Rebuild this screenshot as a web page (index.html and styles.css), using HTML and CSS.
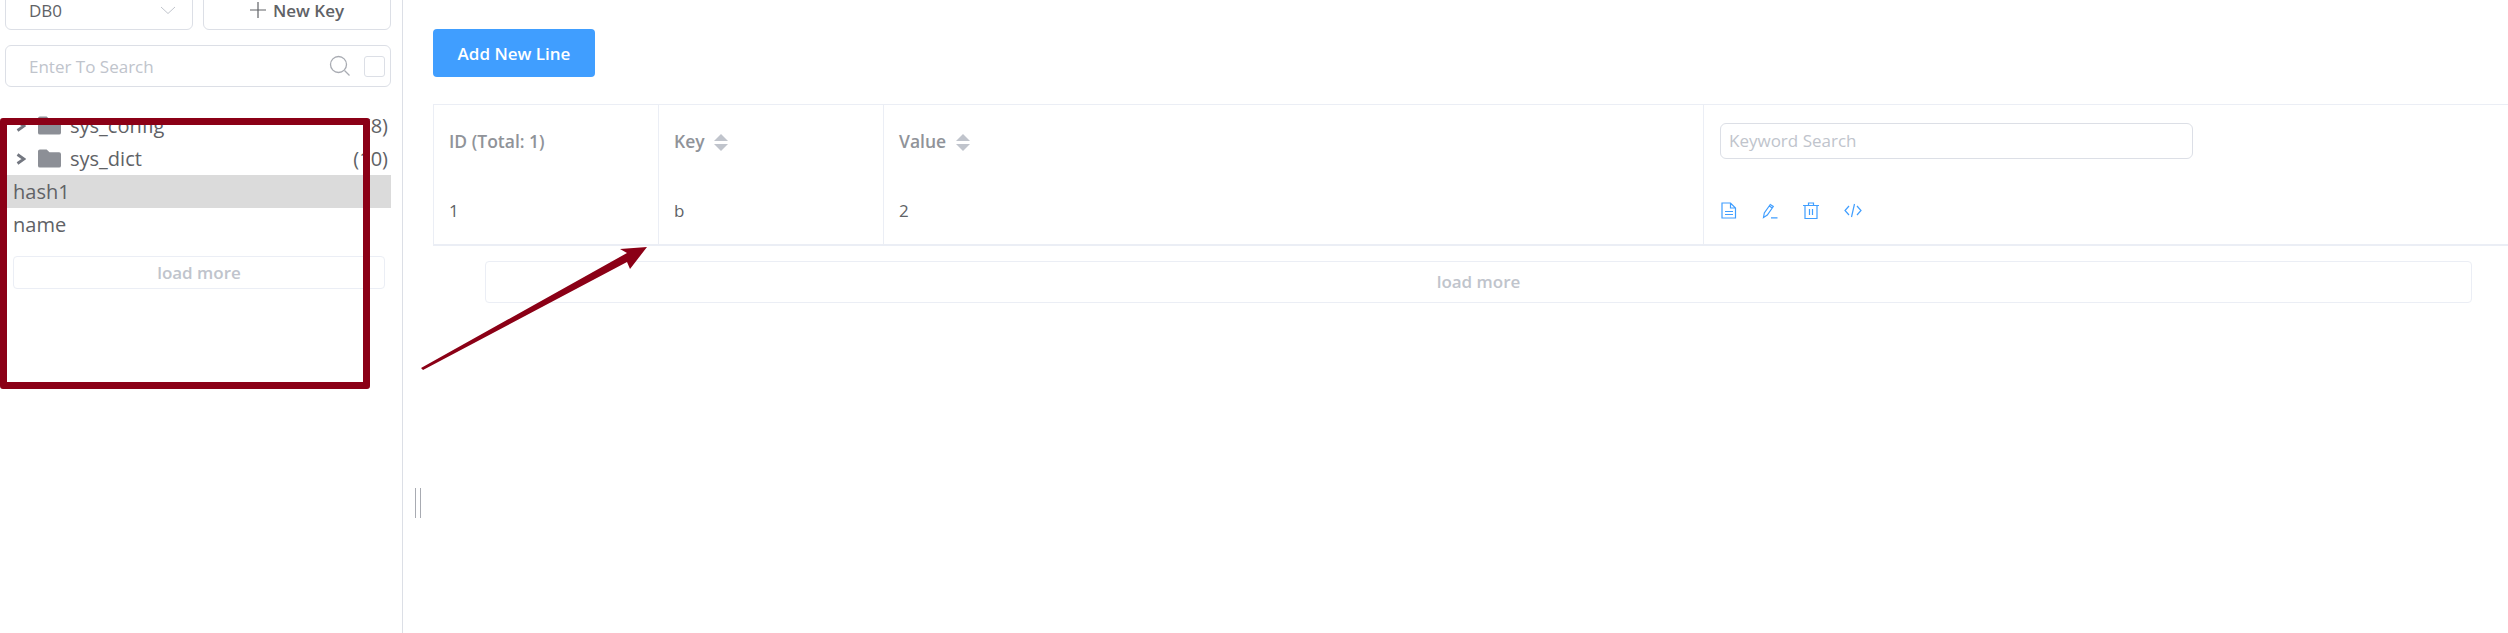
FILE: index.html
```html
<!DOCTYPE html>
<html lang="en">
<head>
    <meta charset="UTF-8">
    <title>Redis Keys</title>
    <link rel="stylesheet" href="styles.css">
</head>
<body>
    <div class="page">
        <aside class="sidebar">
            <div class="toolbar">
                <div class="db-select">
                    <span>DB0</span>
                    <svg class="chevron" viewBox="0 0 16 8" width="16" height="8"><path d="M1 1l7 6.500 7-6.500" fill="none" stroke="#c0c4cc" stroke-width="1"/></svg>
                </div>
                <button class="new-key"><svg class="plus" viewBox="0 0 16 16" width="16" height="16"><path d="M8 0v16M0 8h16" stroke="#606266" stroke-width="1.200"/></svg>New Key</button>
            </div>
            <div class="search-box">
                <span class="search-text">Enter To Search</span>
                <svg class="search-icon" viewBox="0 0 22 22" width="22" height="22"><circle cx="9.500" cy="9.500" r="8" fill="none" stroke="#a8abb2" stroke-width="1.300"/><path d="M15.500 15.500l5 5" stroke="#a8abb2" stroke-width="1.300"/></svg>
                <span class="checkbox"></span>
            </div>
            <ul class="tree">
                <li class="tree-row">
                    <svg class="arrow-right" viewBox="0 0 10 12" width="10" height="12"><path d="M1.500 1.500l6.500 4.500-6.500 4.500" fill="none" stroke="#737780" stroke-width="2.800"/></svg>
                    <svg class="folder" viewBox="0 0 24 19" width="23" height="19"><path d="M2 0h7l3 3h10a2 2 0 0 1 2 2v12a2 2 0 0 1-2 2H2a2 2 0 0 1-2-2V2a2 2 0 0 1 2-2z" fill="#8c8f96"/></svg>
                    <span class="tree-name">sys_config</span>
                    <span class="tree-count">(8)</span>
                </li>
                <li class="tree-row">
                    <svg class="arrow-right" viewBox="0 0 10 12" width="10" height="12"><path d="M1.500 1.500l6.500 4.500-6.500 4.500" fill="none" stroke="#737780" stroke-width="2.800"/></svg>
                    <svg class="folder" viewBox="0 0 24 19" width="23" height="19"><path d="M2 0h7l3 3h10a2 2 0 0 1 2 2v12a2 2 0 0 1-2 2H2a2 2 0 0 1-2-2V2a2 2 0 0 1 2-2z" fill="#8c8f96"/></svg>
                    <span class="tree-name">sys_dict</span>
                    <span class="tree-count">(10)</span>
                </li>
                <li class="key-row selected">hash1</li>
                <li class="key-row">name</li>
            </ul>
            <div class="load-more side-more">load more</div>
        </aside>

        <main class="content">
            <button class="add-line">Add New Line</button>
            <table class="lines">
                <colgroup>
                    <col class="col-id">
                    <col class="col-key">
                    <col class="col-value">
                    <col>
                </colgroup>
                <thead>
                    <tr>
                        <th>ID (Total: 1)</th>
                        <th>Key <span class="sort"><i class="up"></i><i class="down"></i></span></th>
                        <th>Value <span class="sort"><i class="up"></i><i class="down"></i></span></th>
                        <th><div class="keyword">Keyword Search</div></th>
                    </tr>
                </thead>
                <tbody>
                    <tr>
                        <td>1</td>
                        <td>b</td>
                        <td>2</td>
                        <td>
                            <div class="actions">
                                <svg viewBox="0 0 16 17" width="16" height="17"><path d="M1 1h8.500l5 5v10H1zM9.500 1v5h5M4 9.500h8M4 12.500h8" fill="none" stroke="#409eff" stroke-width="1.200"/></svg>
                                <svg viewBox="0 0 16 17" width="16" height="17"><path d="M1.500 15.500l.8-4.500 6-8.500 3 2-6 8.500zM7.300 4l3 2M9 15.800h6.500" fill="none" stroke="#409eff" stroke-width="1.200"/></svg>
                                <svg viewBox="0 0 16 17" width="16" height="17"><path d="M0 3.500h16M5.500 3.500v-2.500h5v2.500M2 3.500v13h12v-13M6.500 7v6M9.500 7v6" fill="none" stroke="#409eff" stroke-width="1.200"/></svg>
                                <svg viewBox="0 0 18 15" width="18" height="15"><path d="M5 3L1 7.500l4 4.500M13 3l4 4.500-4 4.500M10.500 1l-3 13" fill="none" stroke="#409eff" stroke-width="1.200"/></svg>
                            </div>
                        </td>
                    </tr>
                </tbody>
            </table>
            <div class="load-more main-more">load more</div>
        </main>
    </div>

    <!-- handle between sidebar and content -->
    <div class="resizer"></div>

    <!-- annotations drawn over the screenshot -->
    <div class="note-box"></div>
    <svg class="note-arrow" viewBox="0 0 240 130" width="240" height="130"><polygon points="1,122 207,7 200,3 227,1 210,23 207,16 3,124" fill="#8b0016"/></svg>
</body>
</html>
```

FILE: styles.css
```css
* {
    box-sizing: border-box;
}

html, body {
    margin: 0;
    padding: 0;
    height: 100%;
    overflow: hidden;
    background-color: #fff;
}

body {
    font-family: "Open Sans", "Noto Sans", Arial, sans-serif;
    font-size: 17px;
    color: #606266;
    position: relative;
}

ul {
    list-style: none;
    margin: 0;
    padding: 0;
}

button {
    font-family: inherit;
}

.page {
    display: flex;
    height: 633px;
}

.sidebar {
    width: 403px;
    flex: none;
    border-right: 1px solid #dcdfe6;
    padding: 0 11px 0 5px;
}

.toolbar {
    display: flex;
    gap: 10px;
    margin-top: -10px;
}

.db-select,
.new-key {
    flex: 0 0 188px;
    height: 40px;
    border: 1px solid #dcdfe6;
    border-radius: 6px;
    background: #fff;
}

.db-select {
    display: flex;
    align-items: center;
    justify-content: space-between;
    padding: 0 16px 0 23px;
}

.new-key {
    display: flex;
    align-items: center;
    justify-content: center;
    gap: 7px;
    font-size: 17px;
    font-weight: 600;
    color: #606266;
    padding: 0;
}

.search-box {
    display: flex;
    align-items: center;
    height: 42px;
    margin-top: 15px;
    padding: 0 5px 0 23px;
    border: 1px solid #dcdfe6;
    border-radius: 6px;
}

.search-text {
    flex: 1;
    color: #c0c4cc;
}

.search-icon {
    margin-right: 13px;
}

.checkbox {
    width: 21px;
    height: 21px;
    border: 1px solid #dcdfe6;
    border-radius: 3px;
}

.tree {
    margin-top: 22px;
}

.tree-row,
.key-row {
    display: flex;
    align-items: center;
    height: 33px;
    font-size: 20px;
}

.tree-row {
    padding-left: 11px;
}

.folder {
    margin: 0 9px 0 12px;
}

.tree-name {
    flex: 1;
}

.tree-count {
    padding-right: 3px;
}

.key-row {
    padding-left: 8px;
}

.selected {
    background-color: #dbdbdb;
}

.load-more {
    border: 1px solid #ebeef5;
    border-radius: 4px;
    text-align: center;
    font-weight: 600;
    color: #c0c4cc;
}

.side-more {
    margin: 15px 6px 0 8px;
    height: 33px;
    line-height: 31px;
}

.content {
    flex: 1;
    min-width: 0;
    padding: 29px 0 0 30px;
    overflow: hidden;
}

.add-line {
    display: block;
    width: 162px;
    height: 48px;
    border: none;
    border-radius: 4px;
    background-color: #409eff;
    color: #fff;
    font-size: 17px;
    font-weight: 600;
}

.lines {
    width: 2091px;
    margin-top: 27px;
    border-collapse: separate;
    border-spacing: 0;
    table-layout: fixed;
    border-top: 1px solid #ebeef5;
    border-left: 1px solid #ebeef5;
    border-bottom: 2px solid #ebeef5;
}

.col-id,
.col-key {
    width: 225px;
}

.col-value {
    width: 820px;
}

.lines th,
.lines td {
    text-align: left;
    padding: 0 15px;
    border-right: 1px solid #ebeef5;
}

.lines th {
    height: 71px;
    font-size: 17.500px;
    font-weight: 600;
    color: #909399;
}

.lines td {
    height: 68px;
}

.sort {
    display: inline-flex;
    flex-direction: column;
    gap: 3px;
    margin-left: 5px;
    vertical-align: middle;
}

.sort i {
    width: 0;
    height: 0;
    border-left: 7.500px solid transparent;
    border-right: 7.500px solid transparent;
}

.sort .up {
    border-bottom: 7px solid #c0c4cc;
}

.sort .down {
    border-top: 7px solid #c0c4cc;
}

.keyword {
    width: 473px;
    height: 36px;
    line-height: 34px;
    padding-left: 8px;
    margin-left: 1px;
    border: 1px solid #dcdfe6;
    border-radius: 6px;
    font-size: 17px;
    font-weight: 400;
    color: #c0c4cc;
}

.actions {
    display: flex;
    align-items: center;
    gap: 25px;
    padding-left: 2px;
}

.main-more {
    width: 1987px;
    height: 42px;
    line-height: 40px;
    margin: 15px 0 0 52px;
}

.resizer {
    position: absolute;
    left: 415px;
    top: 488px;
    width: 6px;
    height: 30px;
    border-left: 1px solid #a8abb2;
    border-right: 1px solid #a8abb2;
}

.note-box {
    position: absolute;
    left: 0;
    top: 118px;
    width: 370px;
    height: 271px;
    border: 7px solid #8b0016;
    border-radius: 3px;
}

.note-arrow {
    position: absolute;
    left: 420px;
    top: 246px;
}
```
